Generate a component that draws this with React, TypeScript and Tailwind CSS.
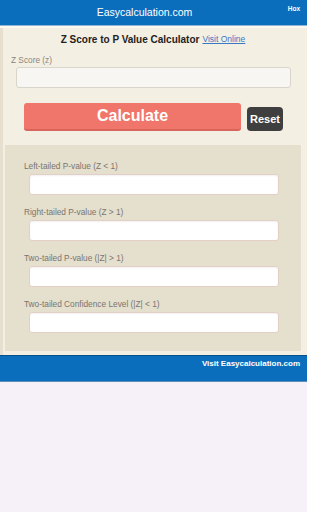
import React from "react";

const font = { fontFamily: '"Liberation Sans", Arial, sans-serif' };

function Field({ label }: { label: string }) {
  return (
    <div className="flex flex-col mb-[12px]">
      <div className="h-[10px] leading-[10px] text-[8.3px] text-[#7a7570] pl-[19px]">{label}</div>
      <div className="mt-[3px] ml-[24px] w-[250px] h-[21px] bg-white border border-[#e3cfc6] rounded-[3px] shadow-[inset_0_1px_2px_rgba(0,0,0,0.06)]" />
    </div>
  );
}

export default function App() {
  return (
    <div className="w-[307px] h-[512px] bg-[#f6f1f8] flex flex-col" style={font}>
      <div className="h-[25px] bg-[#0b6ebd] flex items-center relative">
        <div className="flex-1 text-center text-white text-[10.5px] pr-[18px]">Easycalculation.com</div>
        <div className="absolute right-[7px] top-[4px] text-white text-[6.5px] font-bold">Hox</div>
      </div>
      <div className="h-[3px] bg-[#fbf8f0] border-t border-[#8fb4d4]" />
      <div className="bg-[#f4efe3] border-l-[3px] border-[#e6dfcf] flex flex-col">
        <div className="h-[20px] flex items-center justify-center pr-[4px] pt-[2px]">
          <span className="text-[10px] font-bold text-[#222]">Z Score to P Value Calculator</span>
          <span className="ml-[3px] text-[8.5px] text-[#3b78c4] underline">Visit Online</span>
        </div>
        <div className="h-[18px] flex items-end pl-[8px] pb-[1px] text-[8.3px] text-[#8a8580] leading-[10px]">Z Score (z)</div>
        <div className="mt-[1px] ml-[13px] w-[275px] h-[21px] bg-[#f8f6f2] border border-[#d9d5cd] rounded-[3px]" />
        <div className="mt-[15px] flex items-end h-[28px]">
          <div className="ml-[21px] w-[217px] h-[28px] bg-[#f0766b] rounded-[3px] border-b-[2px] border-[#d8655b] flex items-center justify-center text-white font-bold text-[16px]">
            Calculate
          </div>
          <div className="ml-[6px] w-[36px] h-[24px] bg-[#3f3f3f] rounded-[4px] flex items-center justify-center text-white font-bold text-[11px]">
            Reset
          </div>
        </div>
        <div className="mt-[14px] ml-[2px] mr-[6px] bg-[#e5dfcd] pt-[16px] pb-[6px] flex flex-col">
          <Field label="Left-tailed P-value (Z < 1)" />
          <Field label="Right-tailed P-value (Z > 1)" />
          <Field label="Two-tailed P-value (|Z| > 1)" />
          <Field label="Two-tailed Confidence Level (|Z| < 1)" />
        </div>
        <div className="h-[4px]" />
      </div>
      <div className="h-[27px] bg-[#0b6ebd] border-t border-[#0a4f8a] border-b border-b-[#5d8fb5] flex items-start justify-end pr-[7px] pt-[2px]">
        <span className="text-white font-bold text-[8px]">Visit Easycalculation.com</span>
      </div>
      <div className="flex-1" />
    </div>
  );
}
